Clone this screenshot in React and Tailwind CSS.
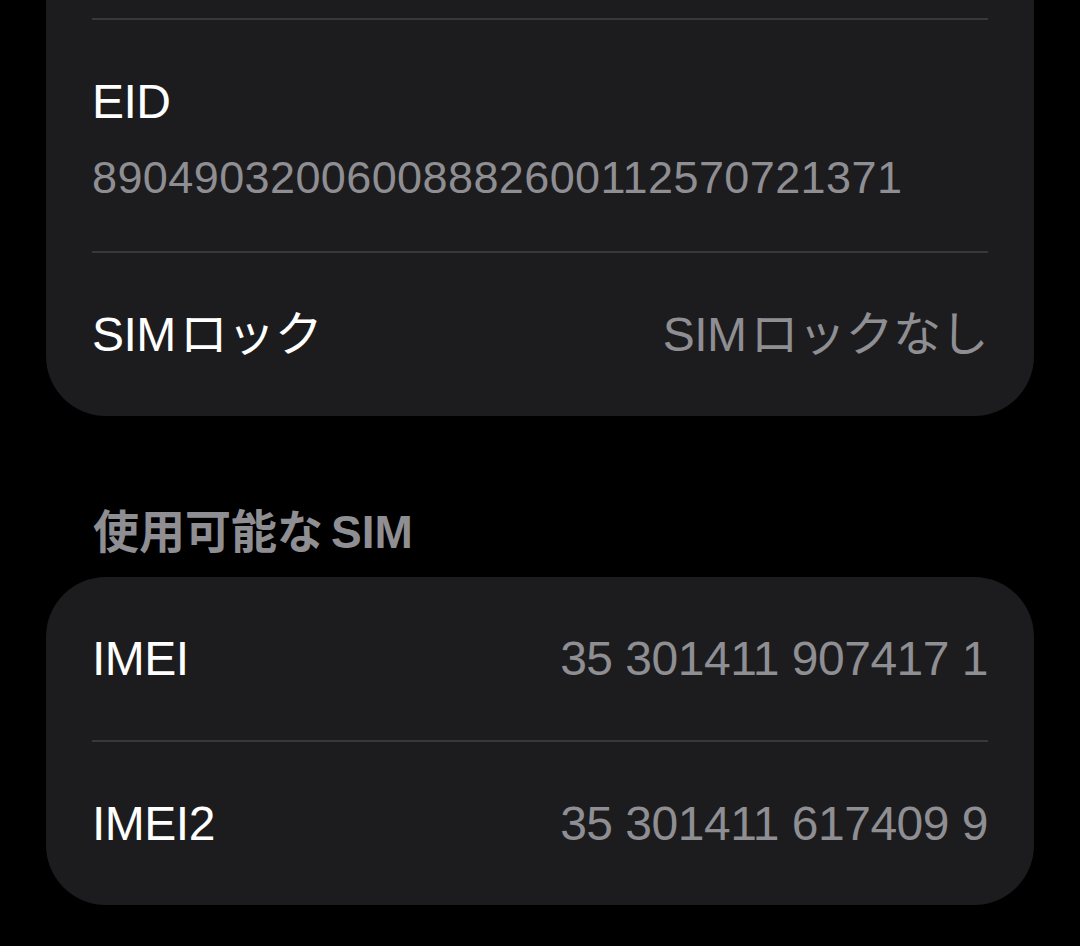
const font = { fontFamily: '"Liberation Sans", "Noto Sans CJK JP", sans-serif' };

const Separator = () => (
  <div className="px-[46px]">
    <div className="h-[2px] bg-[#38383a]" />
  </div>
);

const Row = ({ label, value }) => (
  <div className="flex h-[163px] items-center justify-between px-[46px]">
    <span className="text-[48px] leading-[58px] tracking-[-0.5px] text-white">{label}</span>
    <span className="text-[48px] leading-[58px] tracking-[-0.5px] text-[#8e8e93]">{value}</span>
  </div>
);

const App = () => {
  return (
    <div className="h-[946px] overflow-hidden bg-black" style={font}>
      <div className="mx-[46px] mt-[-145px] rounded-[60px] bg-[#1c1c1e]">
        <div className="h-[163px]" />
        <Separator />
        <div className="px-[46px] pt-[53px] pb-[46px]">
          <p className="text-[48px] leading-[58px] tracking-[-0.5px] text-white">EID</p>
          <p className="mt-[20px] text-[45px] leading-[54px] tracking-[0.4px] text-[#8e8e93]">
            89049032006008882600112570721371
          </p>
        </div>
        <Separator />
        <Row
          label={
            <>
              <span className="mr-[4px]">SIM</span>ロック
            </>
          }
          value={
            <>
              <span className="mr-[4px]">SIM</span>ロックなし
            </>
          }
        />
      </div>

      <h3 className="ml-[93px] pt-[86px] pb-[15px] text-[46px] font-bold leading-[60px] text-[#8e8e93]">
        使用可能な<span className="ml-[8px]">SIM</span>
      </h3>

      <div className="mx-[46px] rounded-[60px] bg-[#1c1c1e]">
        <Row label="IMEI" value="35 301411 907417 1" />
        <Separator />
        <Row label="IMEI2" value="35 301411 617409 9" />
      </div>
    </div>
  );
};

export default App;
